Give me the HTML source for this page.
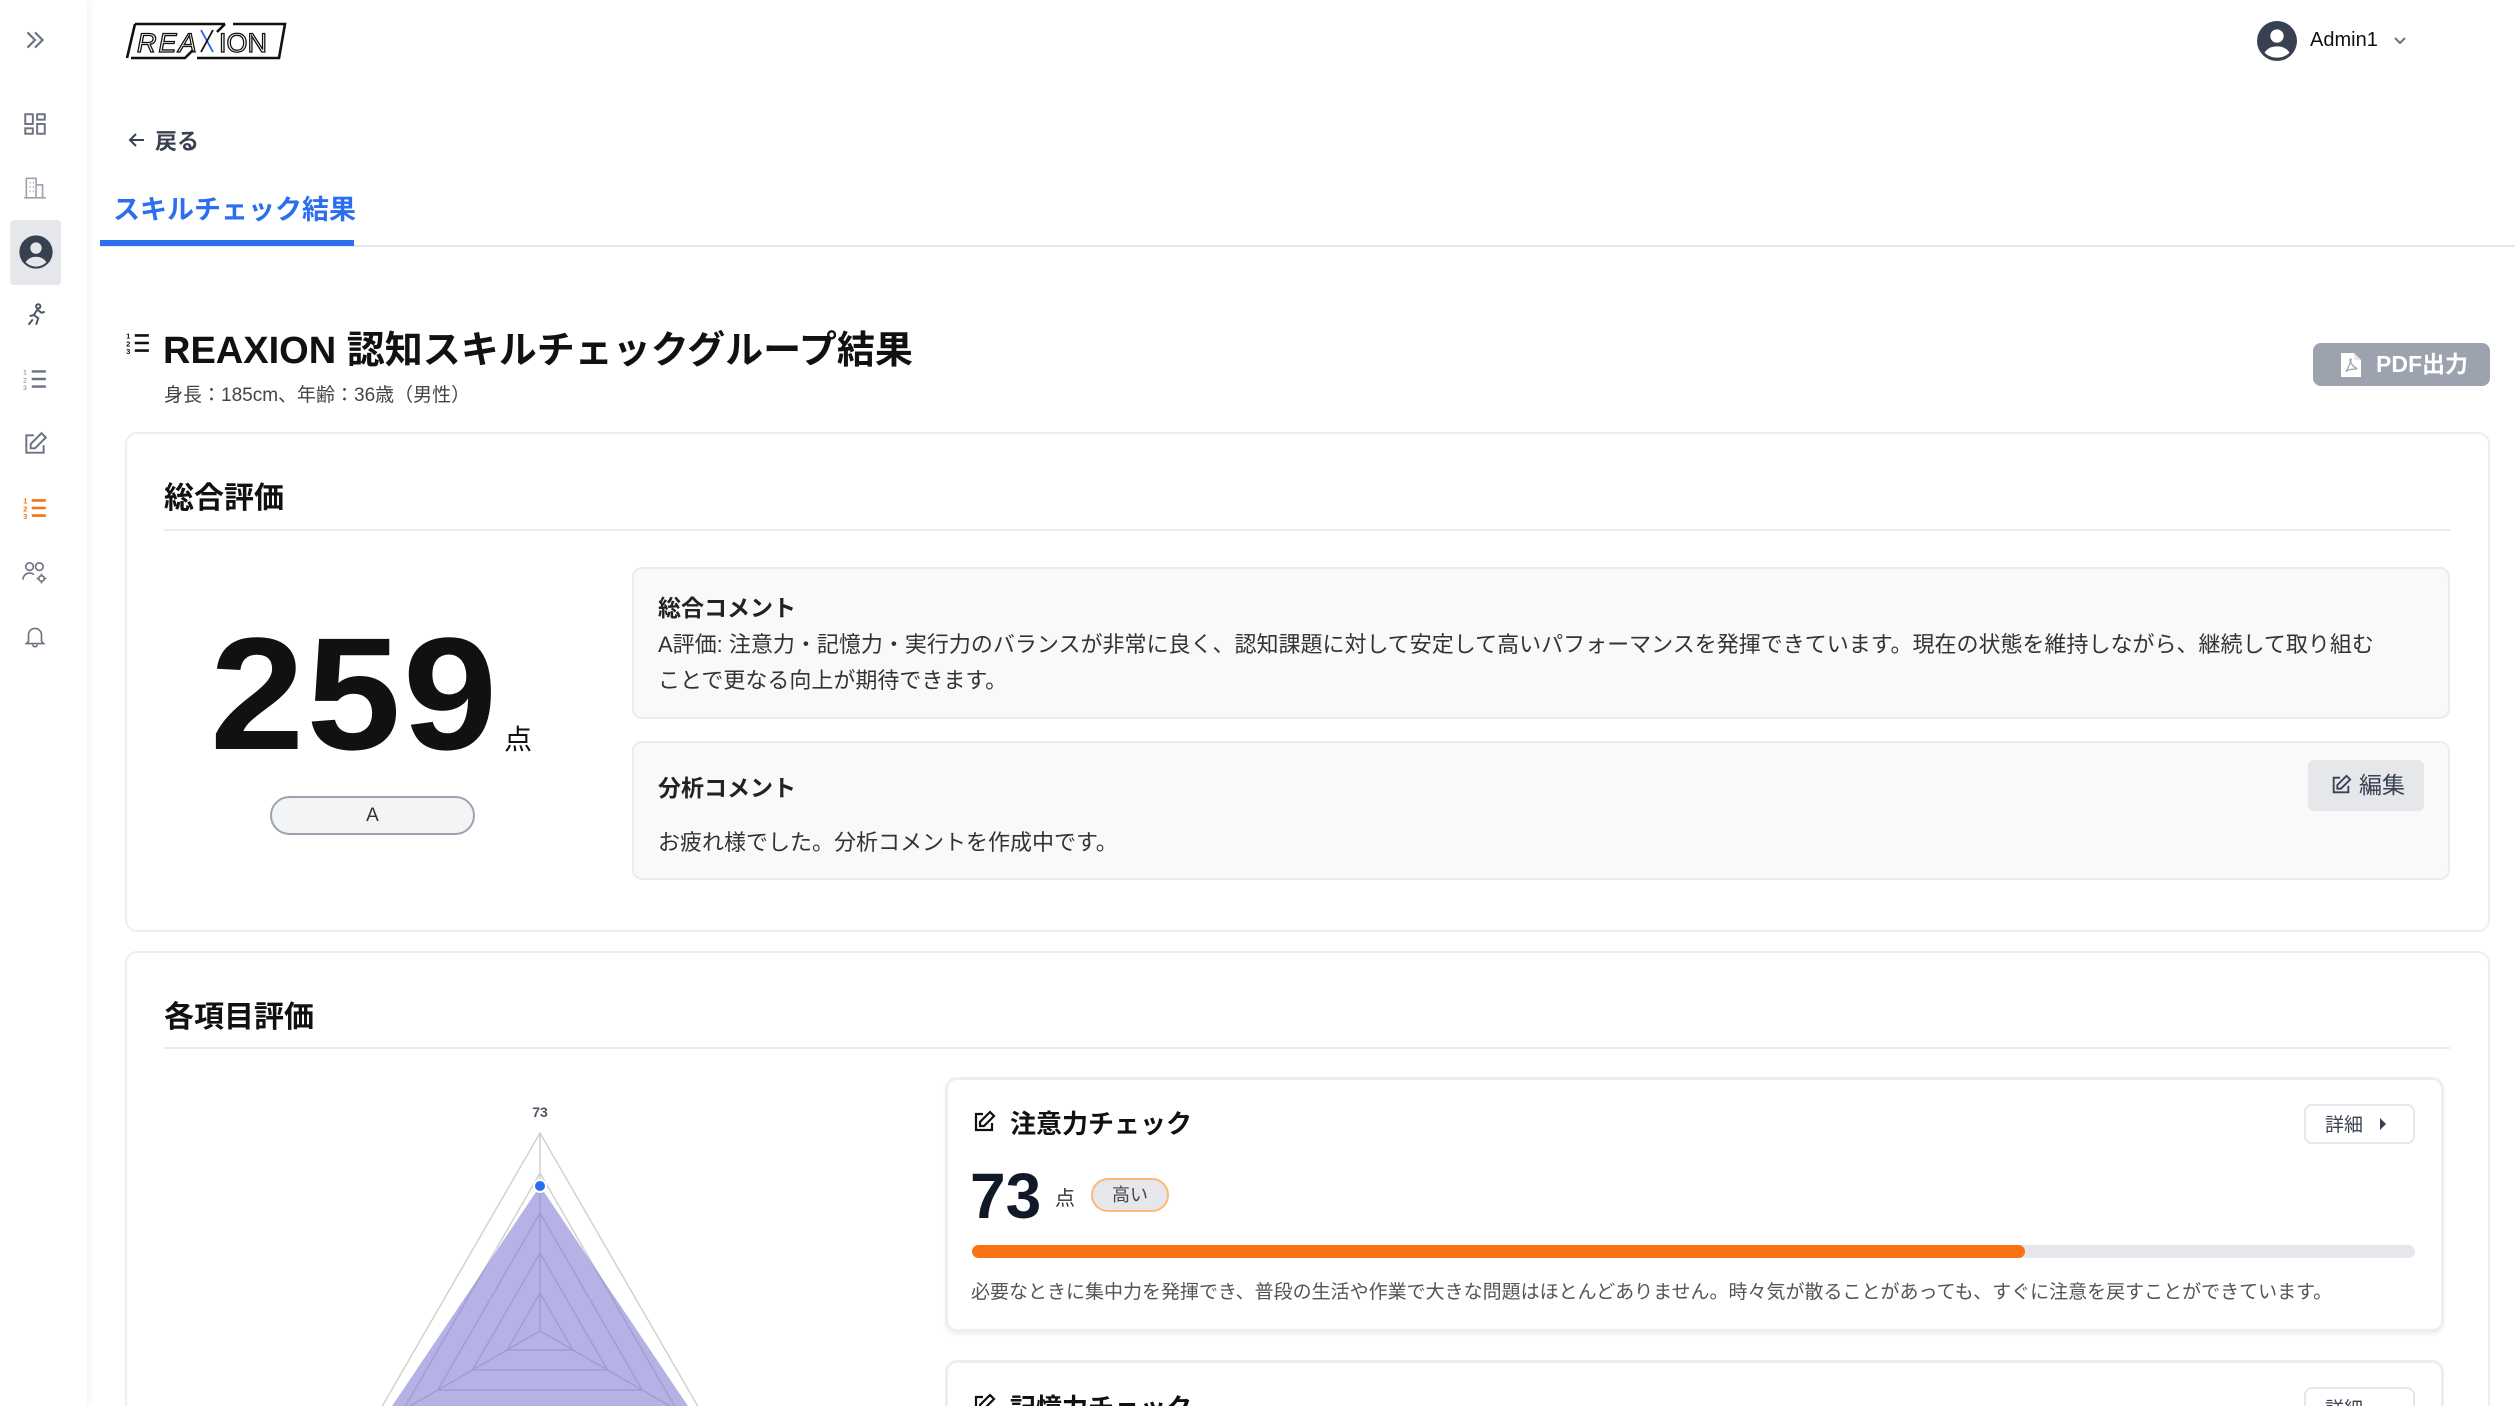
<!DOCTYPE html>
<html style="width:2520px;height:1406px;overflow:hidden"><head><meta charset="utf-8">
<style>
*{margin:0;padding:0;box-sizing:border-box}
body{width:2520px;height:1406px;overflow:hidden;background:#fff;font-family:"Liberation Sans","Noto Sans CJK JP",sans-serif;color:#111}
#w{position:relative;width:2520px;height:1406px;overflow:hidden}
.a{position:absolute}
.sb{left:0;top:0;width:87px;height:1406px;background:#fff;box-shadow:2px 0 8px rgba(0,0,0,.05)}
.ic{position:absolute;left:22px;width:26px;height:26px}
.card{position:absolute;background:#fff;border:2px solid #eee;border-radius:12px}
.box{position:absolute;background:#f9f9f9;border:2px solid #ececec;border-radius:10px}
.t{white-space:nowrap}
</style></head><body><div id="w">
<div class="a sb"></div>
<svg class="ic" style="top:27px" viewBox="0 0 24 24" fill="none" stroke="#6b7280" stroke-width="2"><path d="M5 5l7 7-7 7M12 5l7 7-7 7"/></svg>
<svg class="ic" style="top:111px" viewBox="0 0 24 24" fill="none" stroke="#6b7280" stroke-width="1.8"><rect x="3" y="3" width="7" height="9"/><rect x="14" y="3" width="7" height="5"/><rect x="14" y="12" width="7" height="9"/><rect x="3" y="16" width="7" height="5"/></svg>
<svg class="ic" style="top:175px" viewBox="0 0 24 24" fill="none" stroke="#9ca3af" stroke-width="1.5"><path d="M4 21V3h9v18M13 9h6v12M2 21h20M7 7h1M10 7h1M7 11h1M10 11h1M7 15h1M10 15h1"/></svg>
<div class="a" style="left:10px;top:220px;width:51px;height:65px;background:#e5e7eb;border-radius:4px"></div>
<svg class="ic" style="left:17px;top:233px;width:38px;height:38px" viewBox="0 0 24 24"><circle cx="12" cy="12" r="10.5" fill="#374151"/><circle cx="12" cy="9.5" r="3.6" fill="#e5e7eb"/><path d="M5.5 18.5c1.5-2.5 4-3.5 6.5-3.5s5 1 6.5 3.5c-1.8 1.8-4 2.7-6.5 2.7s-4.7-.9-6.5-2.7z" fill="#e5e7eb"/></svg>
<svg class="ic" style="top:302px" viewBox="0 0 24 24" fill="none" stroke="#4b5563" stroke-width="1.8"><circle cx="15" cy="4" r="2"/><path d="M14 7l-3 5 4 3-2 6M11 12l-4 1M14 7l4 3 3-1M10 16l-4 5"/></svg>
<svg class="ic" style="top:366px" viewBox="0 0 24 24" fill="none" stroke="#6b7280" stroke-width="2.2"><path d="M9 5h13M9 12h13M9 19h13"/><text x="1" y="8" font-size="6" fill="#6b7280" stroke="none">1</text><text x="1" y="15" font-size="6" fill="#6b7280" stroke="none">2</text><text x="1" y="22" font-size="6" fill="#6b7280" stroke="none">3</text></svg>
<svg class="ic" style="top:431px" viewBox="0 0 24 24" fill="none" stroke="#6b7280" stroke-width="1.8"><path d="M11 4H4v16h16v-7"/><path d="M18 2l4 4-10 10H8v-4z"/></svg>
<svg class="ic" style="top:495px" viewBox="0 0 24 24" fill="none" stroke="#f97316" stroke-width="2.4"><path d="M9 5h13M9 12h13M9 19h13"/><text x="1" y="8" font-size="7" font-weight="bold" fill="#f97316" stroke="none">1</text><text x="1" y="15" font-size="7" font-weight="bold" fill="#f97316" stroke="none">2</text><text x="1" y="22" font-size="7" font-weight="bold" fill="#f97316" stroke="none">3</text></svg>
<svg class="ic" style="top:559px" viewBox="0 0 24 24" fill="none" stroke="#6b7280" stroke-width="1.5"><circle cx="7" cy="7" r="3.5"/><circle cx="16" cy="7" r="3.5"/><path d="M1 19c0-4 3-6 6-6 2 0 3 .5 4 1.5"/><circle cx="18" cy="18" r="2.5"/><path d="M18 13.5v2M18 20.5v2M13.5 18h2M20.5 18h2"/></svg>
<svg class="ic" style="top:623px" viewBox="0 0 24 24" fill="none" stroke="#6b7280" stroke-width="1.5"><path d="M6 17V11a6 6 0 0112 0v6l2 2H4zM10 20a2 2 0 004 0"/></svg>

<svg class="a" style="left:125px;top:21px" width="162" height="40" viewBox="0 0 162 40">
<path d="M10 3H100M6 37H60L68 29M10 3L2 37M108 3H160L154 37H72M100 3L92 11" fill="none" stroke="#111" stroke-width="2.6"/>
<text x="12" y="31" font-family="Liberation Sans" font-style="italic" font-size="27" fill="none" stroke="#111" stroke-width="1.3" letter-spacing="2">REA</text>
<path d="M76 9l12 22" stroke="#2563eb" stroke-width="1.8"/><path d="M88 9l-12 22" stroke="#111" stroke-width="1.8"/>
<text x="94" y="31" font-family="Liberation Sans" font-size="27" fill="none" stroke="#111" stroke-width="1.3">ION</text></svg>

<svg class="a" style="left:2257px;top:21px" width="40" height="40" viewBox="0 0 24 24"><circle cx="12" cy="12" r="12" fill="#374151"/><circle cx="12" cy="9" r="4" fill="#fff"/><path d="M4.5 19c1.8-2.8 4.5-3.8 7.5-3.8s5.7 1 7.5 3.8c-2 2-4.6 3-7.5 3s-5.5-1-7.5-3z" fill="#fff"/></svg>
<div class="a t" style="left:2310px;top:29px;font-size:20px;color:#111">Admin1</div>
<svg class="a" style="left:2392px;top:35px" width="16" height="12" viewBox="0 0 16 12" fill="none" stroke="#6b7280" stroke-width="2"><path d="M3 3l5 5 5-5"/></svg>

<svg class="a" style="left:127px;top:130px" width="20" height="20" viewBox="0 0 20 20" fill="none" stroke="#374151" stroke-width="2"><path d="M17 10H4M9 4l-6 6 6 6"/></svg>
<div class="a t" style="left:155px;top:124px;font-size:22px;font-weight:bold;color:#374151">戻る</div>

<div class="a t" style="left:113px;top:188px;font-size:27px;font-weight:bold;color:#2b6ff0">スキルチェック結果</div>
<div class="a" style="left:100px;top:245px;width:2415px;height:2px;background:#e5e7eb"></div>
<div class="a" style="left:100px;top:240px;width:254px;height:6px;background:#2b6ff0"></div>

<svg class="a" style="left:125px;top:330px" width="26" height="26" viewBox="0 0 24 24" fill="none" stroke="#111" stroke-width="2.4"><path d="M9 5h13M9 12h13M9 19h13"/><text x="1" y="8" font-size="7" font-weight="bold" fill="#111" stroke="none">1</text><text x="1" y="15" font-size="7" font-weight="bold" fill="#111" stroke="none">2</text><text x="1" y="22" font-size="7" font-weight="bold" fill="#111" stroke="none">3</text></svg>
<div class="a t" style="left:163px;top:319px;font-size:38px;font-weight:bold;color:#111">REAXION 認知スキルチェックグループ結果</div>
<div class="a t" style="left:164px;top:380px;font-size:19px;color:#444">身長：185cm、年齢：36歳（男性）</div>
<div class="a" style="left:2313px;top:343px;width:177px;height:43px;background:#9ca3af;border-radius:8px"></div>
<svg class="a" style="left:2340px;top:352px" width="22" height="26" viewBox="0 0 22 26"><path d="M1 1h13l7 7v17H1z" fill="#fff"/><path d="M14 1v7h7" fill="#e5e7eb"/><path d="M6 20c3-6 5-10 5-12s-1-1-1 0 2 6 6 8-9 0-10 4" fill="none" stroke="#9ca3af" stroke-width="1.3"/></svg>
<div class="a t" style="left:2376px;top:350px;font-size:23px;font-weight:bold;color:#fff;line-height:28px">PDF出力</div>

<div class="card" style="left:125px;top:432px;width:2365px;height:500px"></div>
<div class="a t" style="left:164px;top:473px;font-size:30px;font-weight:bold">総合評価</div>
<div class="a" style="left:164px;top:529px;width:2286px;height:2px;background:#ececec"></div>
<div class="a t" style="left:210px;top:614px;font-size:160px;font-weight:bold;line-height:1;letter-spacing:2px;transform:scaleX(1.06);transform-origin:left">259</div>
<div class="a t" style="left:504px;top:718px;font-size:28px;color:#111">点</div>
<div class="a" style="left:270px;top:796px;width:205px;height:39px;background:#f3f4f6;border:2px solid #9ca3af;border-radius:20px;text-align:center;line-height:35px;font-size:19px;color:#333">A</div>

<div class="box" style="left:632px;top:567px;width:1818px;height:152px"></div>
<div class="a t" style="left:658px;top:589px;font-size:23px;font-weight:bold;color:#222">総合コメント</div>
<div class="a t" style="left:658px;top:627px;font-size:22px;line-height:36px;color:#333">A評価: 注意力・記憶力・実行力のバランスが非常に良く、認知課題に対して安定して高いパフォーマンスを発揮できています。現在の状態を維持しながら、継続して取り組む<br>ことで更なる向上が期待できます。</div>
<div class="box" style="left:632px;top:741px;width:1818px;height:139px"></div>
<div class="a t" style="left:658px;top:769px;font-size:23px;font-weight:bold;color:#222">分析コメント</div>
<div class="a t" style="left:658px;top:825px;font-size:22px;color:#333">お疲れ様でした。分析コメントを作成中です。</div>
<div class="a" style="left:2308px;top:760px;width:116px;height:51px;background:#e5e7eb;border-radius:6px"></div>
<svg class="a" style="left:2330px;top:774px" width="22" height="22" viewBox="0 0 24 24" fill="none" stroke="#374151" stroke-width="2"><path d="M11 4H4v16h16v-7"/><path d="M18 2l4 4-10 10H8v-4z"/></svg>
<div class="a t" style="left:2359px;top:772px;font-size:23px;color:#374151;line-height:26px">編集</div>

<div class="card" style="left:125px;top:951px;width:2365px;height:500px"></div>
<div class="a t" style="left:164px;top:992px;font-size:30px;font-weight:bold">各項目評価</div>
<div class="a" style="left:164px;top:1047px;width:2286px;height:2px;background:#ececec"></div>

<svg class="a" style="left:300px;top:1095px" width="480" height="311" viewBox="300 1095 480 311">
<text x="540" y="1117" text-anchor="middle" font-family="Liberation Sans" font-weight="bold" font-size="14" fill="#4b5563">73</text>
<g fill="none" stroke="#d1d1d1" stroke-width="1.5">
<polygon points="540,1133 711.5,1430 368.5,1430"/>
<polygon points="540,1173 676.8,1410 403.2,1410"/>
<polygon points="540,1213 642.2,1390 437.8,1390"/>
<polygon points="540,1253 607.5,1370 472.5,1370"/>
<polygon points="540,1293 572.9,1350 507.1,1350"/>
<path d="M540 1331V1133M540 1331L711.5 1430M540 1331L368.5 1430"/>
</g>
<polygon points="540,1186 700,1424 380,1424" fill="rgba(120,115,210,.55)"/>
<circle cx="540" cy="1186" r="6" fill="#2b6ff0" stroke="#fff" stroke-width="2"/>
</svg>

<div class="card" style="left:945px;top:1077px;width:1499px;height:255px;border-width:3px;box-shadow:0 3px 4px rgba(0,0,0,.06)"></div>
<svg class="a" style="left:972px;top:1110px" width="24" height="24" viewBox="0 0 24 24" fill="none" stroke="#111" stroke-width="2.2"><path d="M11 4H4v16h16v-7"/><path d="M18 2l4 4-10 10H8v-4z"/></svg>
<div class="a t" style="left:1010px;top:1104px;font-size:26px;font-weight:bold;color:#111">注意力チェック</div>
<div class="a" style="left:2304px;top:1104px;width:111px;height:40px;border:2px solid #e5e7eb;border-radius:8px;background:#fff"></div>
<div class="a t" style="left:2325px;top:1110px;font-size:19px;color:#374151">詳細</div>
<svg class="a" style="left:2378px;top:1116px" width="10" height="16" viewBox="0 0 10 16"><path d="M2 2l6 6-6 6z" fill="#374151"/></svg>
<div class="a t" style="left:970px;top:1164px;font-size:64px;font-weight:bold;line-height:1;color:#111827">73</div>
<div class="a t" style="left:1055px;top:1182px;font-size:20px;color:#333">点</div>
<div class="a" style="left:1091px;top:1178px;width:78px;height:34px;background:#e5e7eb;border:2px solid #fdba74;border-radius:17px;text-align:center;line-height:30px;font-size:18px;color:#444">高い</div>
<div class="a" style="left:972px;top:1245px;width:1443px;height:13px;background:#e5e7eb;border-radius:7px"></div>
<div class="a" style="left:972px;top:1245px;width:1053px;height:13px;background:#f97316;border-radius:7px"></div>
<div class="a t" style="left:971px;top:1277px;font-size:19px;color:#555">必要なときに集中力を発揮でき、普段の生活や作業で大きな問題はほとんどありません。時々気が散ることがあっても、すぐに注意を戻すことができています。</div>

<div class="card" style="left:945px;top:1360px;width:1499px;height:100px;border-width:3px"></div>
<svg class="a" style="left:972px;top:1393px" width="24" height="24" viewBox="0 0 24 24" fill="none" stroke="#111" stroke-width="2.2"><path d="M11 4H4v16h16v-7"/><path d="M18 2l4 4-10 10H8v-4z"/></svg>
<div class="a t" style="left:1010px;top:1388px;font-size:26px;font-weight:bold;color:#111">記憶力チェック</div>
<div class="a" style="left:2304px;top:1387px;width:111px;height:40px;border:2px solid #e5e7eb;border-radius:8px;background:#fff"></div>
<div class="a t" style="left:2325px;top:1394px;font-size:19px;color:#374151">詳細</div>
</div></body></html>
